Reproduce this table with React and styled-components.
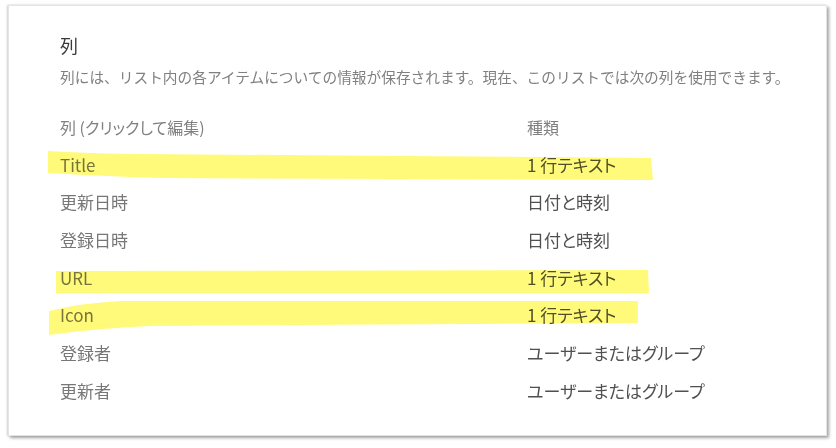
import React from 'react';
import styled, {createGlobalStyle} from 'styled-components';

const GlobalStyle = createGlobalStyle`
    html, body {
        margin: 0;
        padding: 0;
        background: #fff;
    }
    body {
        font-family: "Noto Sans CJK JP", "Noto Sans", sans-serif;
        font-feature-settings: "palt";
    }
`;

const Page = styled.div`
    padding: 5px 9px 12px 8px;
`;

const Card = styled.section`
    position: relative;
    height: 431px;
    box-sizing: border-box;
    background: #fff;
    border: 1px solid #e4e4e4;
    box-shadow: 2px 2px 3px rgba(0, 0, 0, 0.35), -1px 0 2px rgba(0, 0, 0, 0.18);
    padding: 27px 40px 0 51px;
`;

const Heading = styled.h2`
    margin: 0;
    font-size: 18px;
    line-height: 24px;
    font-weight: 400;
    color: #3a3a3a;
`;

const Description = styled.p`
    margin: 8px 0 19px;
    font-size: 14.7px;
    line-height: 24px;
    color: #808080;
    white-space: nowrap;
    font-feature-settings: normal;
`;

const Table = styled.div`
    display: grid;
    grid-template-columns: 467px 1fr;
    grid-auto-rows: 37.7px;
    align-items: center;
`;

const Cell = styled.div`
    font-size: 17px;
    line-height: 24px;
    color: ${p => (p.$type ? '#505050' : '#777')};
    white-space: nowrap;
`;

const HeadCell = styled(Cell)`
    font-size: 16px;
    color: #808080;
`;

const Marker = styled.svg`
    position: absolute;
    left: 0;
    top: 0;
    pointer-events: none;
    mix-blend-mode: multiply;
`;

const rows = [
    ['Title', '1 行テキスト'],
    ['更新日時', '日付と時刻'],
    ['登録日時', '日付と時刻'],
    ['URL', '1 行テキスト'],
    ['Icon', '1 行テキスト'],
    ['登録者', 'ユーザーまたはグループ'],
    ['更新者', 'ユーザーまたはグループ'],
];

const strokes = [
    'M39 145 Q90 148 132 148 L392 150 L642 152 L644 174 L392 173 L152 172 Q90 170 39 167 Z',
    'M47 265 L639 264 L640 287 L47 287 Z',
    'M40 305 Q72 297 112 295 L629 295 L629 317 L142 320 Q92 322 40 329 Z',
];

export default function App() {
    return (
        <Page>
            <GlobalStyle />
            <Card>
                <Heading>列</Heading>
                <Description>
                    列には、リスト内の各アイテムについての情報が保存されます。現在、このリストでは次の列を使用できます。
                </Description>
                <Table>
                    <HeadCell>列 (クリックして編集)</HeadCell>
                    <HeadCell>種類</HeadCell>
                    {rows.map(([name, type]) => (
                        <React.Fragment key={name}>
                            <Cell>{name}</Cell>
                            <Cell $type>{type}</Cell>
                        </React.Fragment>
                    ))}
                </Table>
                <Marker width="819" height="431" viewBox="0 0 819 431">
                    {strokes.map(d => (
                        <path key={d} d={d} fill="#fffa7a" />
                    ))}
                </Marker>
            </Card>
        </Page>
    );
}
